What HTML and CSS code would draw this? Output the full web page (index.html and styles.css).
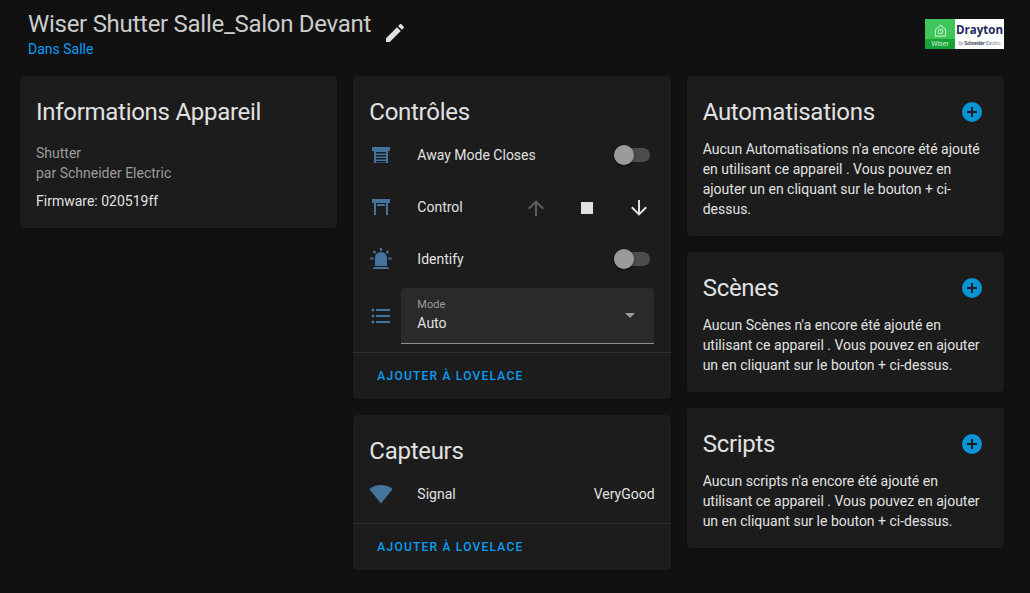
FILE: index.html
```html
<!DOCTYPE html>
<html lang="fr">
<head>
<meta charset="utf-8">
<title>Wiser Shutter Salle_Salon Devant</title>
<link rel="stylesheet" href="styles.css">
</head>
<body>
<header class="top">
  <div class="top-text">
    <h1 class="page-title">Wiser Shutter Salle_Salon Devant</h1>
    <a class="area">Dans Salle</a>
  </div>
  <svg class="pencil" viewBox="0 0 24 24"><path d="M20.71,7.04C21.1,6.65 21.1,6 20.71,5.63L18.37,3.29C18,2.9 17.35,2.9 16.96,3.29L15.12,5.12L18.87,8.87M3,17.25V21H6.75L17.81,9.93L14.06,6.18L3,17.25Z"/></svg>
  <div class="logo">
    <div class="logo-green">
      <svg class="logo-home" viewBox="0 0 24 24"><path d="M4 10.5 12 3.5l8 7V21H4Z"/><circle cx="12" cy="13.5" r="3.5"/><path d="M12 9.5v3"/></svg>
      <span class="logo-wiser">Wiser</span>
    </div>
    <div class="logo-white">
      <span class="logo-drayton">Drayton</span>
      <span class="logo-by">by <b>Schneider</b> Electric</span>
    </div>
  </div>
</header>
<main class="grid">
  <div class="col">
    <section class="card card-info">
      <h2 class="card-title">Informations Appareil</h2>
      <div class="muted">Shutter</div>
      <div class="muted">par Schneider Electric</div>
      <div class="firmware">Firmware: 020519ff</div>
    </section>
  </div>
  <div class="col">
    <section class="card">
      <div class="content content-controls">
        <h2 class="card-title">Contrôles</h2>
        <div class="row">
          <svg class="icon" viewBox="0 0 24 24"><path d="M3 4H21V8H19V20H5V8H3V4M7 9V10.5H17V9H7M7 12V13.5H17V12H7M7 15V16.5H17V15H7M7 18V19.5H17V18H7Z"/></svg>
          <span class="name">Away Mode Closes</span>
          <span class="toggle"><span class="thumb"></span></span>
        </div>
        <div class="row">
          <svg class="icon" viewBox="0 0 24 24"><path d="M3 4H21V8H19V20H17V8H7V20H5V8H3V4M8 9H16V11H8V9Z"/></svg>
          <span class="name">Control</span>
          <span class="covers">
            <svg class="ctl ctl-off" viewBox="0 0 24 24"><path d="M13,20H11V8L5.5,13.5L4.08,12.08L12,4.16L19.92,12.08L18.5,13.5L13,8V20Z"/></svg>
            <svg class="ctl" viewBox="0 0 24 24"><path d="M18,18H6V6H18V18Z"/></svg>
            <svg class="ctl" viewBox="0 0 24 24"><path d="M11,4H13V16L18.5,10.5L19.92,11.92L12,19.84L4.08,11.92L5.5,10.5L11,16V4Z"/></svg>
          </span>
        </div>
        <div class="row">
          <svg class="icon" viewBox="0 0 24 24"><path d="M6,6.9L3.87,4.78L5.28,3.37L7.4,5.5L6,6.9M13,1V4H11V1H13M20.13,4.78L18,6.9L16.6,5.5L18.72,3.37L20.13,4.78M4.5,10.5V12.5H1.5V10.5H4.5M19.5,10.5H22.5V12.5H19.5V10.5M6,20H18A2,2 0 0,1 20,22H4A2,2 0 0,1 6,20M12,5A6,6 0 0,1 18,11V19H6V11A6,6 0 0,1 12,5Z"/></svg>
          <span class="name">Identify</span>
          <span class="toggle"><span class="thumb"></span></span>
        </div>
        <div class="row row-select">
          <svg class="icon" viewBox="0 0 24 24"><path d="M7,5H21V7H7V5M7,13V11H21V13H7M4,4.5A1.5,1.5 0 0,1 5.5,6A1.5,1.5 0 0,1 4,7.5A1.5,1.5 0 0,1 2.5,6A1.5,1.5 0 0,1 4,4.5M4,10.5A1.5,1.5 0 0,1 5.5,12A1.5,1.5 0 0,1 4,13.5A1.5,1.5 0 0,1 2.5,12A1.5,1.5 0 0,1 4,10.5M7,19V17H21V19H7M4,16.5A1.5,1.5 0 0,1 5.5,18A1.5,1.5 0 0,1 4,19.5A1.5,1.5 0 0,1 2.5,18A1.5,1.5 0 0,1 4,16.5Z"/></svg>
          <div class="select">
            <div class="select-text">
              <span class="select-label">Mode</span>
              <span class="select-value">Auto</span>
            </div>
            <span class="caret"></span>
          </div>
        </div>
      </div>
      <div class="actions"><a class="action">AJOUTER À LOVELACE</a></div>
    </section>
    <section class="card">
      <div class="content content-sensors">
        <h2 class="card-title">Capteurs</h2>
        <div class="row">
          <svg class="icon" viewBox="0 0 24 24"><path d="M12,3C7.79,3 3.7,4.41 0.38,7C4.41,12.06 7.89,16.37 12,21.5C16.08,16.42 20.24,11.24 23.65,7C20.32,4.41 16.22,3 12,3Z"/></svg>
          <span class="name">Signal</span>
          <span class="value">VeryGood</span>
        </div>
      </div>
      <div class="actions"><a class="action">AJOUTER À LOVELACE</a></div>
    </section>
  </div>
  <div class="col">
    <section class="card card-auto">
      <div class="auto-head">
        <h2 class="card-title">Automatisations</h2>
        <svg class="plus" viewBox="0 0 24 24"><path d="M17,13H13V17H11V13H7V11H11V7H13V11H17M12,2A10,10 0 0,0 2,12A10,10 0 0,0 12,22A10,10 0 0,0 22,12A10,10 0 0,0 12,2Z"/></svg>
      </div>
      <p class="auto-text">Aucun Automatisations n'a encore été ajouté en utilisant ce appareil . Vous pouvez en ajouter un en cliquant sur le bouton + ci-dessus.</p>
    </section>
    <section class="card card-auto">
      <div class="auto-head">
        <h2 class="card-title">Scènes</h2>
        <svg class="plus" viewBox="0 0 24 24"><path d="M17,13H13V17H11V13H7V11H11V7H13V11H17M12,2A10,10 0 0,0 2,12A10,10 0 0,0 12,22A10,10 0 0,0 22,12A10,10 0 0,0 12,2Z"/></svg>
      </div>
      <p class="auto-text">Aucun Scènes n'a encore été ajouté en utilisant ce appareil . Vous pouvez en ajouter un en cliquant sur le bouton + ci-dessus.</p>
    </section>
    <section class="card card-auto">
      <div class="auto-head">
        <h2 class="card-title">Scripts</h2>
        <svg class="plus" viewBox="0 0 24 24"><path d="M17,13H13V17H11V13H7V11H11V7H13V11H17M12,2A10,10 0 0,0 2,12A10,10 0 0,0 12,22A10,10 0 0,0 22,12A10,10 0 0,0 12,2Z"/></svg>
      </div>
      <p class="auto-text">Aucun scripts n'a encore été ajouté en utilisant ce appareil . Vous pouvez en ajouter un en cliquant sur le bouton + ci-dessus.</p>
    </section>
  </div>
</main>
</body>
</html>
```
FILE: styles.css
```css
* { box-sizing: border-box; }
html, body { height: 100%; }
body {
  margin: 0;
  background: #111111;
  color: #e1e1e1;
  font-family: Roboto, "Noto Sans", sans-serif;
  font-size: 14px;
  overflow: hidden;
}
.top {
  display: flex;
  height: 76px;
  padding: 8px 26px 0 28px;
  align-items: flex-start;
}
.top-text { display: flex; flex-direction: column; }
.page-title {
  margin: 0;
  font-size: 24px;
  font-weight: 400;
  line-height: 32px;
  letter-spacing: -0.28px;
  color: #cccccc;
}
.area { font-size: 14px; line-height: 16px; margin-top: 1px; color: #0a9cf5; }
.pencil { width: 24px; height: 24px; margin: 13px 0 0 12px; fill: #e1e1e1; }
.logo { display: flex; width: 79px; height: 30px; margin: 11px 0 0 auto; }
.logo-green {
  width: 30px;
  display: flex;
  flex-direction: column;
  align-items: center;
  background: linear-gradient(#3fc65a 0 20px, #17a33a 20px);
}
.logo-home { width: 15px; height: 17px; margin-top: 3px; fill: none; stroke: #b6ecc0; stroke-width: 1.8; }
.logo-wiser { font-size: 7px; line-height: 9px; margin-top: 1px; color: #cfeed6; }
.logo-white {
  flex: 1;
  display: flex;
  flex-direction: column;
  align-items: center;
  background: #ffffff;
}
.logo-drayton { font-size: 11.5px; font-weight: 700; line-height: 14px; margin-top: 4px; color: #1a2a5c; font-family: "Open Sans", Roboto, sans-serif; }
.logo-by { font-size: 4.5px; line-height: 7px; margin-top: 3px; color: #778; white-space: nowrap; }
.logo-by b { color: #345; }
.grid {
  display: grid;
  grid-template-columns: repeat(3, 1fr);
  gap: 16px;
  padding: 0 26px 0 20px;
  align-items: start;
}
.col { display: flex; flex-direction: column; gap: 16px; }
.card { background: #1c1c1c; border-radius: 4px; box-shadow: 0 1px 2px rgba(0,0,0,.3); }
.card-title { margin: 0; font-size: 24px; font-weight: 400; line-height: 32px; letter-spacing: -0.28px; color: #e1e1e1; }
.card-info { height: 152px; padding: 20px 16px 0; }
.muted { line-height: 20px; color: #9b9b9b; }
.card-info .card-title { margin-bottom: 15px; }
.firmware { line-height: 20px; margin-top: 8px; }
.content { padding: 20px 16px 0; }
.content-controls { padding-bottom: 5px; }
.content-sensors { padding-bottom: 3px; }
.content .card-title { margin-bottom: 1px; }
.row { display: flex; align-items: center; height: 52px; }
.row-select { height: 62px; }
.icon { width: 24px; height: 24px; flex: none; fill: #44739e; }
.name { margin-left: 24px; flex: 1; }
.toggle {
  position: relative;
  width: 36px;
  height: 14px;
  margin-right: 5px;
  border-radius: 7px;
  background: #4c4c4c;
}
.thumb {
  position: absolute;
  left: 0;
  top: -3px;
  width: 20px;
  height: 20px;
  border-radius: 50%;
  background: #9b9b9b;
  box-shadow: 0 1px 3px rgba(0,0,0,.4);
}
.covers { display: flex; gap: 27.5px; margin: 2px 4px 0 0; }
.ctl { width: 24px; height: 24px; fill: #e1e1e1; }
.ctl-off { fill: #5f5f5f; }
.select {
  flex: 1;
  display: flex;
  align-items: center;
  justify-content: space-between;
  height: 56px;
  margin: 0 1px 0 8px;
  padding: 0 19px 0 16px;
  background: #2a2a2a;
  border-radius: 4px 4px 0 0;
  border-bottom: 1px solid #8c8c8c;
}
.select-text { display: flex; flex-direction: column; }
.select-label { font-size: 11px; line-height: 14px; color: #9b9b9b; }
.select-value { font-size: 14px; line-height: 20px; margin-top: 1px; color: #e1e1e1; }
.caret {
  width: 0;
  height: 0;
  border-left: 5px solid transparent;
  border-right: 5px solid transparent;
  border-top: 5px solid #9b9b9b;
}
.actions { height: 47px; padding: 0 24px; display: flex; align-items: center; border-top: 1px solid #2f2f2f; }
.action { font-size: 12px; font-weight: 500; letter-spacing: 1.22px; color: #0a9cf5; }
.card-auto { padding: 20px 16px 0; }
.auto-head { display: flex; justify-content: space-between; align-items: center; height: 32px; }
.plus { width: 24px; height: 24px; margin-right: 4px; fill: #0a94d8; }
.auto-text { margin: 11px 0 0; line-height: 20px; padding-bottom: 17px; }
```
